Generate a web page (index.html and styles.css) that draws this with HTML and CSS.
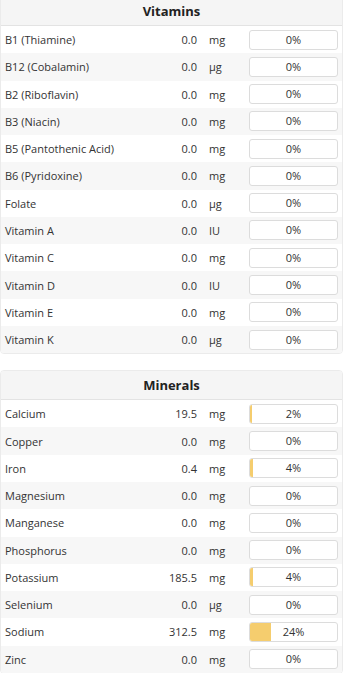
FILE: index.html
```html
<!DOCTYPE html>
<html>
<head>
<meta charset="utf-8">
<link rel="stylesheet" href="styles.css">
</head>
<body>
<section class="card card-first">
  <div class="card-head">Vitamins</div>
  <div class="row"><span class="name">B1 (Thiamine)</span><span class="val">0.0</span><span class="unit">mg</span><span class="bar"><span class="fill" style="width:0%"></span><span class="pct">0%</span></span></div>
  <div class="row"><span class="name">B12 (Cobalamin)</span><span class="val">0.0</span><span class="unit">µg</span><span class="bar"><span class="fill" style="width:0%"></span><span class="pct">0%</span></span></div>
  <div class="row"><span class="name">B2 (Riboflavin)</span><span class="val">0.0</span><span class="unit">mg</span><span class="bar"><span class="fill" style="width:0%"></span><span class="pct">0%</span></span></div>
  <div class="row"><span class="name">B3 (Niacin)</span><span class="val">0.0</span><span class="unit">mg</span><span class="bar"><span class="fill" style="width:0%"></span><span class="pct">0%</span></span></div>
  <div class="row"><span class="name">B5 (Pantothenic Acid)</span><span class="val">0.0</span><span class="unit">mg</span><span class="bar"><span class="fill" style="width:0%"></span><span class="pct">0%</span></span></div>
  <div class="row"><span class="name">B6 (Pyridoxine)</span><span class="val">0.0</span><span class="unit">mg</span><span class="bar"><span class="fill" style="width:0%"></span><span class="pct">0%</span></span></div>
  <div class="row"><span class="name">Folate</span><span class="val">0.0</span><span class="unit">µg</span><span class="bar"><span class="fill" style="width:0%"></span><span class="pct">0%</span></span></div>
  <div class="row"><span class="name">Vitamin A</span><span class="val">0.0</span><span class="unit">IU</span><span class="bar"><span class="fill" style="width:0%"></span><span class="pct">0%</span></span></div>
  <div class="row"><span class="name">Vitamin C</span><span class="val">0.0</span><span class="unit">mg</span><span class="bar"><span class="fill" style="width:0%"></span><span class="pct">0%</span></span></div>
  <div class="row"><span class="name">Vitamin D</span><span class="val">0.0</span><span class="unit">IU</span><span class="bar"><span class="fill" style="width:0%"></span><span class="pct">0%</span></span></div>
  <div class="row"><span class="name">Vitamin E</span><span class="val">0.0</span><span class="unit">mg</span><span class="bar"><span class="fill" style="width:0%"></span><span class="pct">0%</span></span></div>
  <div class="row"><span class="name">Vitamin K</span><span class="val">0.0</span><span class="unit">µg</span><span class="bar"><span class="fill" style="width:0%"></span><span class="pct">0%</span></span></div>
</section>
<section class="card">
  <div class="card-head">Minerals</div>
  <div class="row"><span class="name">Calcium</span><span class="val">19.5</span><span class="unit">mg</span><span class="bar"><span class="fill" style="width:2%"></span><span class="pct">2%</span></span></div>
  <div class="row"><span class="name">Copper</span><span class="val">0.0</span><span class="unit">mg</span><span class="bar"><span class="fill" style="width:0%"></span><span class="pct">0%</span></span></div>
  <div class="row"><span class="name">Iron</span><span class="val">0.4</span><span class="unit">mg</span><span class="bar"><span class="fill" style="width:4%"></span><span class="pct">4%</span></span></div>
  <div class="row"><span class="name">Magnesium</span><span class="val">0.0</span><span class="unit">mg</span><span class="bar"><span class="fill" style="width:0%"></span><span class="pct">0%</span></span></div>
  <div class="row"><span class="name">Manganese</span><span class="val">0.0</span><span class="unit">mg</span><span class="bar"><span class="fill" style="width:0%"></span><span class="pct">0%</span></span></div>
  <div class="row"><span class="name">Phosphorus</span><span class="val">0.0</span><span class="unit">mg</span><span class="bar"><span class="fill" style="width:0%"></span><span class="pct">0%</span></span></div>
  <div class="row"><span class="name">Potassium</span><span class="val">185.5</span><span class="unit">mg</span><span class="bar"><span class="fill" style="width:4%"></span><span class="pct">4%</span></span></div>
  <div class="row"><span class="name">Selenium</span><span class="val">0.0</span><span class="unit">µg</span><span class="bar"><span class="fill" style="width:0%"></span><span class="pct">0%</span></span></div>
  <div class="row"><span class="name">Sodium</span><span class="val">312.5</span><span class="unit">mg</span><span class="bar"><span class="fill" style="width:24%"></span><span class="pct">24%</span></span></div>
  <div class="row"><span class="name">Zinc</span><span class="val">0.0</span><span class="unit">mg</span><span class="bar"><span class="fill" style="width:0%"></span><span class="pct">0%</span></span></div>
</section>
</body>
</html>
```
FILE: styles.css
```css
html, body {
  margin: 0;
  padding: 0;
  background: #fff;
}
body {
  font-family: "Open Sans", "Liberation Sans", sans-serif;
  font-size: 11px;
  color: #333;
  overflow: hidden;
}
.card {
  border: 1px solid #ebebeb;
  border-radius: 4px;
  background: #fff;
  margin-bottom: 16px;
  overflow: hidden;
}
.card-first {
  margin-top: -4px;
}
.card-head {
  background: #f5f5f5;
  border-bottom: 1px solid #e3e3e3;
  text-align: center;
  font-weight: 700;
  font-size: 13px;
  height: 28px;
  line-height: 28px;
  color: #222;
}
.row {
  display: flex;
  align-items: center;
  height: 27.27px;
  padding: 0 4px 0 4px;
}
.row:nth-of-type(odd) {
  background: #f7f7f7;
}
.name {
  flex: 1;
}
.val {
  width: 60px;
  text-align: right;
}
.unit {
  width: 40px;
  margin-left: 12px;
}
.bar {
  position: relative;
  width: 87px;
  height: 18px;
  border: 1px solid #dcdcdc;
  border-radius: 3px;
  background: #fff;
  overflow: hidden;
}
.fill {
  position: absolute;
  left: 0;
  top: 0;
  bottom: 0;
  background: #f5cd6e;
}
.pct {
  position: relative;
  display: block;
  text-align: center;
  line-height: 18px;
}
```
